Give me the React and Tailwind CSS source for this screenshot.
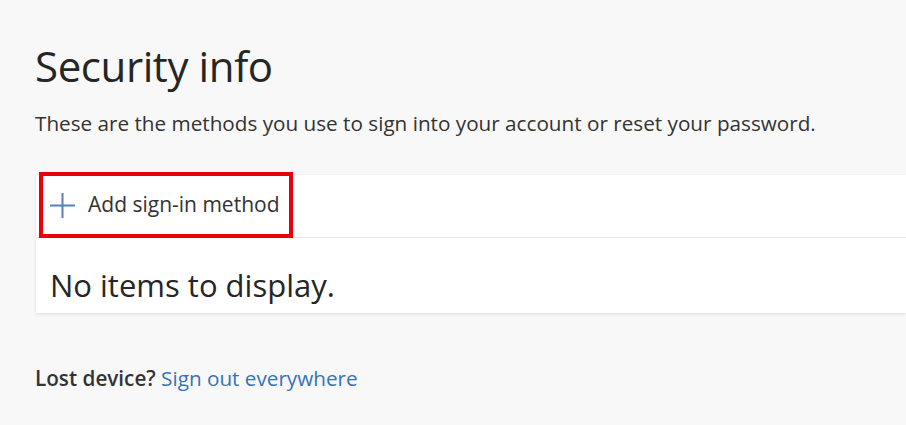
export default function App() {
  return (
    <div
      className="min-h-screen w-[906px] h-[425px] overflow-hidden bg-[#f8f8f8] pl-[35px] pt-[38px]"
      style={{ fontFamily: '"Open Sans", "Noto Sans", sans-serif' }}
    >
      <h1 className="text-[42px] leading-[56px] text-[#262626] tracking-[-0.4px]">Security info</h1>
      <p className="mt-[15px] text-[20.7px] leading-[28px] text-[#333]">
        These are the methods you use to sign into your account or reset your password.
      </p>

      {/* Methods card */}
      <div className="mt-[38px] ml-[1px] bg-white shadow-[0_1px_3px_rgba(0,0,0,0.12)]">
        <div className="h-[63px] border-b border-[#e6e6e6] flex items-start">
          <button className="ml-[3px] w-[254px] h-[66px] -mt-[3px] border-[4px] border-[#e8000b] flex items-center pl-[7px] gap-[13px]">
            <svg width="25" height="25" viewBox="0 0 25 25" fill="none" stroke="#5a7fbf" strokeWidth="2">
              <path d="M12.5 0v25M0 12.5h25" />
            </svg>
            <span className="text-[21px] text-[#333]">Add sign-in method</span>
          </button>
        </div>
        <div className="h-[75px] pl-[14px] pt-[27px]">
          <p className="text-[31px] leading-[40px] text-[#262626]">No items to display.</p>
        </div>
      </div>

      <p className="mt-[51px] text-[20.7px] leading-[28px] text-[#333]">
        <span className="font-semibold">Lost device?</span>{' '}
        <a href="#" className="text-[#3572b8]">Sign out everywhere</a>
      </p>
    </div>
  );
}
